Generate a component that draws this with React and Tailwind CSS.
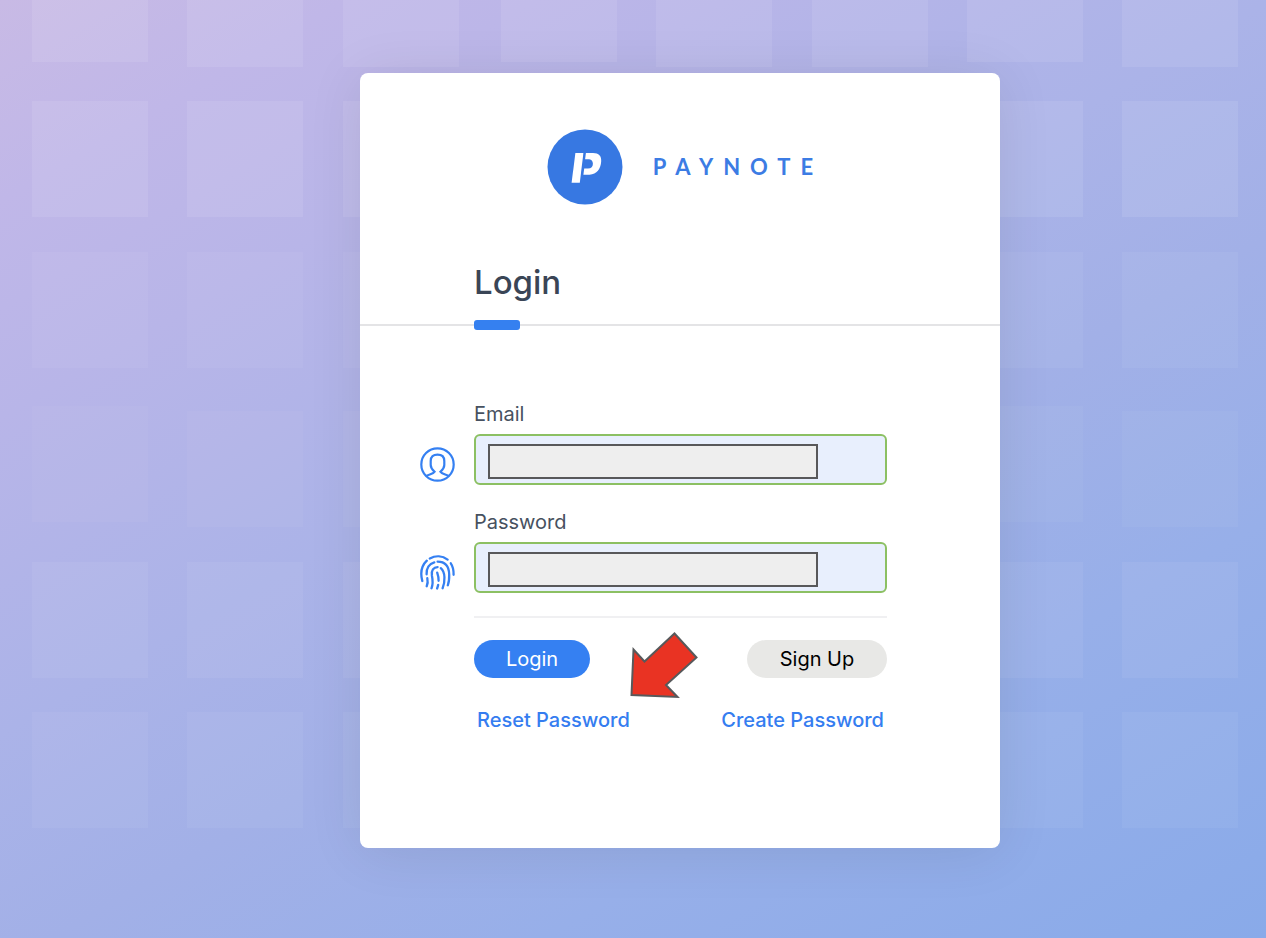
const COLUMNS = [32, 187, 343, 501, 656, 812, 967, 1122];
const ROWS = [
  { y: -54, shift: 5, opacity: 0.09 },
  { y: 101, shift: 0, opacity: 0.09 },
  { y: 252, shift: 0, opacity: 0.05 },
  { y: 406, shift: 5, opacity: 0.04 },
  { y: 562, shift: 0, opacity: 0.06 },
  { y: 712, shift: 0, opacity: 0.05 },
];

function TilePattern() {
  return (
    <svg className="absolute inset-0 h-full w-full" aria-hidden="true">
      {ROWS.map((row) =>
        COLUMNS.map((x, i) => (
          <rect
            key={`${row.y}-${x}`}
            x={x}
            y={row.y + (i % 3 === 0 ? 0 : row.shift)}
            width="116"
            height="116"
            fill="#fff"
            fillOpacity={row.opacity}
          />
        ))
      )}
    </svg>
  );
}

function Logo() {
  return (
    <svg width="76" height="76" viewBox="0 0 76 76" aria-hidden="true">
      <circle cx="38" cy="38" r="37.5" fill="#3778e2" />
      <path d="M28.4 24H36.4L32.8 53.7H24.6Z" fill="#fff" />
      <path
        d="M38.9 24H46C51.9 24 54.5 27 54.2 32.3C53.8 39.5 49.8 45.7 42.5 45.7H36.4L37.2 39.6H41C44.3 39.6 45.9 37.6 45.9 34.8C45.9 31.6 43.8 30.3 41.2 30.3H38.1Z"
        fill="#fff"
      />
    </svg>
  );
}

function UserIcon() {
  return (
    <svg width="35" height="35" viewBox="0 0 35 35" fill="none" stroke="#3580f2" strokeWidth="2.2" aria-hidden="true">
      <circle cx="17.5" cy="17.5" r="16.2" />
      <path d="M6 29.2C8.3 27.4 13.2 27.2 14.6 24.8C12 22.5 10.7 21 10.7 18V14C10.7 9.6 13.3 7.7 17.5 7.7S24.3 9.6 24.3 14V18C24.3 21 23 22.5 20.4 24.8C21.8 27.2 26.7 27.4 29 29.2" />
    </svg>
  );
}

function FingerprintIcon() {
  return (
    <svg
      width="35"
      height="35"
      viewBox="0 0 35 35"
      fill="none"
      stroke="#3580f2"
      strokeWidth="2.3"
      strokeLinecap="round"
      aria-hidden="true"
    >
      <path d="M2.3 26C.3 18.5 .7 11.5 6.8 5.7" />
      <path d="M9.8 3.5C15.5 .5 22.5 .7 27.6 4.6" />
      <path d="M30.8 8.3C33 11.5 33.7 15 33.6 19.8" />
      <path d="M6.6 19.3C6.2 13 9.5 8.6 14.3 7.3" />
      <path d="M17.6 6.7C25.5 6.7 29 12 29.2 19.5C29.3 23.5 29.3 26.5 27.8 30.3" />
      <path d="M7.3 23.2C8 26.3 7.8 28.7 6.7 31.3" />
      <path d="M11.5 33.3C13.4 28.5 12.8 25 11.9 20.5C11.1 15.5 13.5 12.1 17.6 12.1" />
      <path d="M20.8 13.2C25.5 17 25.2 27 22.6 33.3" />
      <path d="M17.2 17.6C18.2 20.5 18.7 22.8 18.6 25.8" />
      <path d="M18.2 29.8C18 31 17.7 32 17.1 33.5" />
    </svg>
  );
}

function Field({ id, label, type, icon }) {
  return (
    <div className="flex items-end">
      <div className="flex h-[38px] w-[54px] shrink-0 items-start">{icon}</div>
      <div className="min-w-0 flex-1">
        <label htmlFor={id} className="block text-[20px] leading-6 text-[#475160]">
          {label}
        </label>
        <div className="relative mt-2">
          <input
            id={id}
            type={type}
            className="block h-[51px] w-full rounded-md border-2 border-[#8cc063] bg-[#e8effd] px-3 text-lg outline-none"
          />
          <div className="absolute top-[10px] left-[14px] h-[35px] w-4/5 border-2 border-[#58585a] bg-[#eeeeee]" />
        </div>
      </div>
    </div>
  );
}

function Arrow() {
  return (
    <svg
      className="absolute top-[14px] left-[156px]"
      width="70"
      height="68"
      viewBox="0 0 70 68"
      fill="#e93323"
      stroke="#58595b"
      strokeWidth="2"
      aria-hidden="true"
    >
      <path d="M44.5 1.5L66.5 25.5L36 53L47.5 65L1.5 63L3.5 17.5L14.5 29.5Z" />
    </svg>
  );
}

export default function App() {
  return (
    <div className="relative min-h-screen bg-[linear-gradient(150deg,#c8bae5_0%,#c0b7e8_12%,#b8b5e8_25%,#abb3e8_44%,#a2b0e7_58%,#97afe9_75%,#89aae9_100%)] pt-[73px] pb-[90px] pl-[94px] font-['Inter',sans-serif]">
      <TilePattern />
      <main className="relative mx-auto w-full max-w-[640px] rounded-lg bg-white pt-14 pb-[114px] shadow-[0_4px_56px_rgba(0,0,0,0.09)]">
        <div className="flex items-center justify-center gap-[30px]">
          <Logo />
          <span className="-mr-[10px] font-['Lato',sans-serif] text-[22px] leading-7 font-bold tracking-[10px] text-[#3c7ce4]">
            PAYNOTE
          </span>
        </div>

        <div className="mt-14 border-b-2 border-[#e4e4e6] px-[114px]">
          <h1 className="text-[33px] leading-[43px] font-medium text-[#3a4556]">Login</h1>
          <div className="relative mt-[16px] -mb-[6px] h-[10px] w-[46px] rounded-[3px] bg-[#3580f0]" />
        </div>

        <form className="mt-[76px] pr-[113px] pl-[60px]" onSubmit={(e) => e.preventDefault()}>
          <div className="flex flex-col gap-[25px]">
            <Field id="email" label="Email" type="email" icon={<UserIcon />} />
            <Field id="password" label="Password" type="password" icon={<FingerprintIcon />} />
          </div>
          <div className="relative mt-[23px] ml-[54px] border-t-2 border-[#f0f0f2] pt-[22px]">
            <div className="flex justify-between">
              <button type="submit" className="h-[38px] w-[116px] rounded-full bg-[#3580f2] text-[20px] text-white">
                Login
              </button>
              <button type="button" className="h-[38px] w-[140px] rounded-full bg-[#e8e8e6] text-[20px] text-black">
                Sign Up
              </button>
            </div>
            <div className="mt-7 flex justify-between px-[3px] text-[20px] leading-7 font-medium text-[#357df0]">
              <a href="#reset">Reset Password</a>
              <a href="#create">Create Password</a>
            </div>
            <Arrow />
          </div>
        </form>
      </main>
    </div>
  );
}
